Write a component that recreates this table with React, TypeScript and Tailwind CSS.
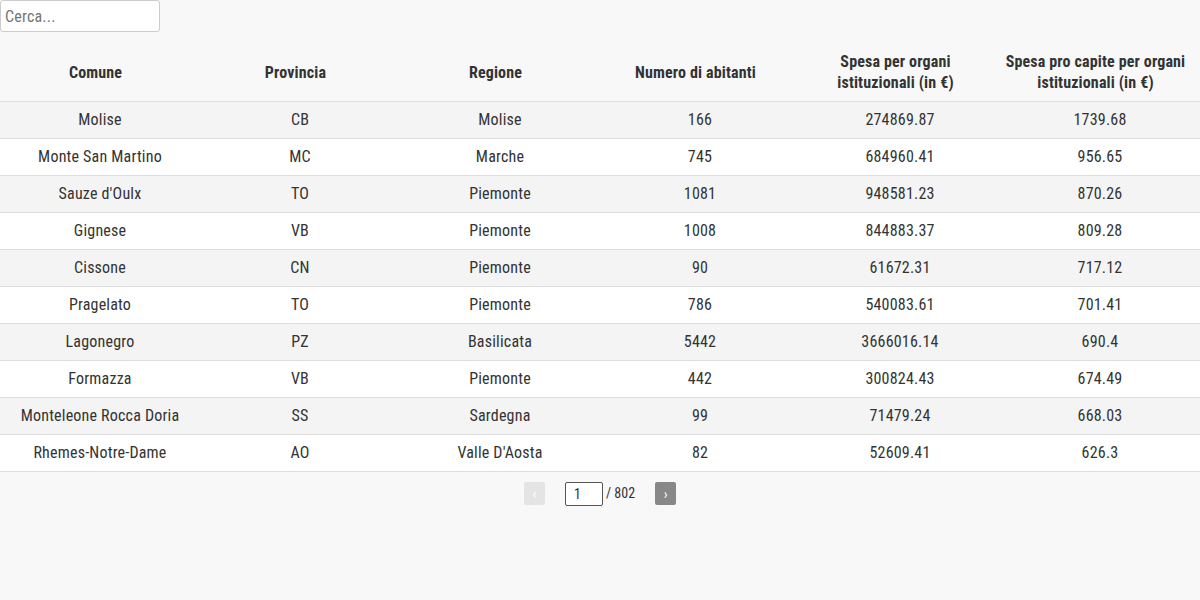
import React from 'react';

const rows = [
  ['Molise', 'CB', 'Molise', '166', '274869.87', '1739.68'],
  ['Monte San Martino', 'MC', 'Marche', '745', '684960.41', '956.65'],
  ["Sauze d'Oulx", 'TO', 'Piemonte', '1081', '948581.23', '870.26'],
  ['Gignese', 'VB', 'Piemonte', '1008', '844883.37', '809.28'],
  ['Cissone', 'CN', 'Piemonte', '90', '61672.31', '717.12'],
  ['Pragelato', 'TO', 'Piemonte', '786', '540083.61', '701.41'],
  ['Lagonegro', 'PZ', 'Basilicata', '5442', '3666016.14', '690.4'],
  ['Formazza', 'VB', 'Piemonte', '442', '300824.43', '674.49'],
  ['Monteleone Rocca Doria', 'SS', 'Sardegna', '99', '71479.24', '668.03'],
  ['Rhemes-Notre-Dame', 'AO', "Valle D'Aosta", '82', '52609.41', '626.3'],
];

const headers = [
  'Comune',
  'Provincia',
  'Regione',
  'Numero di abitanti',
  'Spesa per organi istituzionali (in €)',
  'Spesa pro capite per organi istituzionali (in €)',
];

export default function App() {
  return (
    <div className="min-h-[600px] bg-[#f8f8f8] text-[#333] font-['Roboto_Condensed','Roboto',sans-serif] text-[16px]">
      <input
        placeholder="Cerca..."
        className="block w-[160px] h-[32px] px-[4px] bg-white border border-[#ccc] rounded-[3px] text-[16px] tracking-[0.2px] placeholder:text-[#757575] outline-none"
      />
      <table className="mt-[12px] w-full table-fixed border-collapse">
        <thead>
          <tr className="border-b border-[#ddd]">
            {headers.map((h) => (
              <th key={h} className="w-[200px] pl-[4px] pr-[13px] py-[7px] h-[57px] font-bold leading-[21px] tracking-[0.15px] text-center align-middle">
                {h}
              </th>
            ))}
          </tr>
        </thead>
        <tbody>
          {rows.map((r, i) => (
            <tr key={r[0]} className={`border-b border-[#ddd] ${i % 2 === 0 ? 'bg-[#f4f4f4]' : 'bg-white'}`}>
              {r.map((c, j) => (
                <td key={j} className="py-[8px] leading-[20px] tracking-[0.2px] text-center">
                  {c}
                </td>
              ))}
            </tr>
          ))}
        </tbody>
      </table>
      <div className="flex items-center justify-center mt-[10px] text-[14px]">
        <button className="w-[21px] h-[23px] rounded-[2px] bg-[#e4e4e4] text-white text-[14px] leading-none">‹</button>
        <input
          defaultValue="1"
          className="ml-[20px] w-[38px] h-[24px] px-[8px] bg-white border border-[#555] rounded-[2px] text-[14px] outline-none"
        />
        <span className="ml-[3px]">/ 802</span>
        <button className="ml-[20px] w-[21px] h-[23px] rounded-[2px] bg-[#888] text-white text-[14px] leading-none">›</button>
      </div>
    </div>
  );
}
